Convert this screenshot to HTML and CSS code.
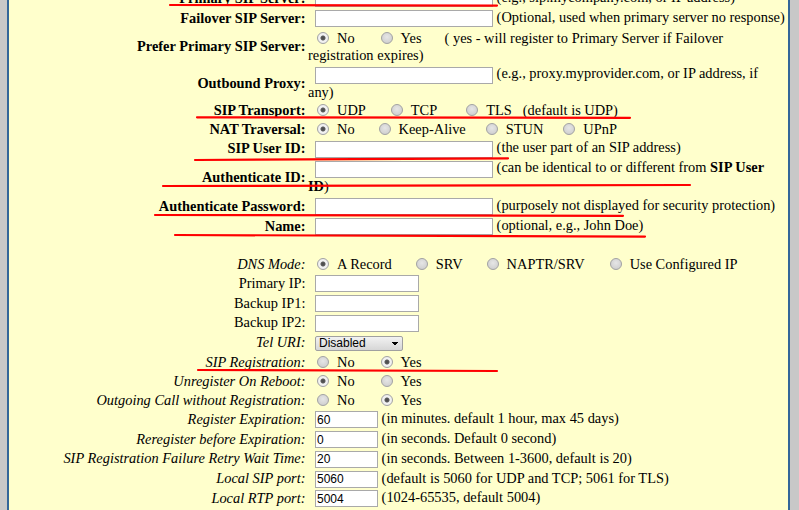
FILE: index.html
```html
<!DOCTYPE html>
<html>
<head>
<meta charset="utf-8">
<title>SIP Account</title>
<link rel="stylesheet" href="styles.css">
</head>
<body>
<div class="panel">
<table class="form">
<colgroup><col class="c1"><col class="c2"></colgroup>
<tbody class="basic">
<tr class="ti"><td class="lbl">Primary SIP Server:</td><td class="val"><input class="tx w178" type="text"> (e.g., sip.mycompany.com, or IP address)</td></tr>
<tr class="ti"><td class="lbl">Failover SIP Server:</td><td class="val"><input class="tx w178" type="text"> (Optional, used when primary server no response)</td></tr>
<tr class="m37"><td class="lbl">Prefer Primary SIP Server:</td><td class="val"><label class="opt first"><input class="rb" type="radio" name="pp" checked>No</label><label class="opt g26"><input class="rb" type="radio" name="pp">Yes</label><span class="note g23">( yes - will register to Primary Server if Failover registration expires)</span></td></tr>
<tr class="m36"><td class="lbl">Outbound Proxy:</td><td class="val"><input class="tx w178" type="text"> (e.g., proxy.myprovider.com, or IP address, if any)</td></tr>
<tr class="tr"><td class="lbl">SIP Transport:</td><td class="val"><label class="opt first"><input class="rb" type="radio" name="tp" checked>UDP</label><label class="opt g25"><input class="rb" type="radio" name="tp">TCP</label><label class="opt g29"><input class="rb" type="radio" name="tp">TLS</label><span class="note g11">(default is UDP)</span></td></tr>
<tr class="tr"><td class="lbl">NAT Traversal:</td><td class="val"><label class="opt first"><input class="rb" type="radio" name="nat" checked>No</label><label class="opt g24"><input class="rb" type="radio" name="nat">Keep-Alive</label><label class="opt g20"><input class="rb" type="radio" name="nat">STUN</label><label class="opt g20"><input class="rb" type="radio" name="nat">UPnP</label></td></tr>
<tr class="tu"><td class="lbl">SIP User ID:</td><td class="val"><input class="tx w178" type="text"> (the user part of an SIP address)</td></tr>
<tr class="m38"><td class="lbl">Authenticate ID:</td><td class="val"><input class="tx w178" type="text"> (can be identical to or different from <b>SIP User ID</b>)</td></tr>
<tr class="ti"><td class="lbl">Authenticate Password:</td><td class="val"><input class="tx w178" type="password"> (purposely not displayed for security protection)</td></tr>
<tr class="ti"><td class="lbl">Name:</td><td class="val"><input class="tx w178" type="text"> (optional, e.g., John Doe)</td></tr>
</tbody>
<tbody class="adv">
<tr class="gap"><td></td><td></td></tr>
<tr class="tr"><td class="lbl">DNS Mode:</td><td class="val"><label class="opt first"><input class="rb" type="radio" name="dns" checked>A Record</label><label class="opt g24"><input class="rb" type="radio" name="dns">SRV</label><label class="opt g24"><input class="rb" type="radio" name="dns">NAPTR/SRV</label><label class="opt g25"><input class="rb" type="radio" name="dns">Use Configured IP</label></td></tr>
<tr class="li"><td class="lbl plain">Primary IP:</td><td class="val"><input class="tx w104" type="text"></td></tr>
<tr class="li"><td class="lbl plain">Backup IP1:</td><td class="val"><input class="tx w104" type="text"></td></tr>
<tr class="li"><td class="lbl plain">Backup IP2:</td><td class="val"><input class="tx w104" type="text"></td></tr>
<tr class="li"><td class="lbl">Tel URI:</td><td class="val"><select class="sel"><option>Disabled</option><option>User=Phone</option><option>Enabled</option></select></td></tr>
<tr class="tr"><td class="lbl">SIP Registration:</td><td class="val"><label class="opt first"><input class="rb" type="radio" name="reg">No</label><label class="opt g26"><input class="rb" type="radio" name="reg" checked>Yes</label></td></tr>
<tr class="tr"><td class="lbl">Unregister On Reboot:</td><td class="val"><label class="opt first"><input class="rb" type="radio" name="unreg" checked>No</label><label class="opt g26"><input class="rb" type="radio" name="unreg">Yes</label></td></tr>
<tr class="tr"><td class="lbl">Outgoing Call without Registration:</td><td class="val"><label class="opt first"><input class="rb" type="radio" name="ocr">No</label><label class="opt g26"><input class="rb" type="radio" name="ocr" checked>Yes</label></td></tr>
<tr class="li"><td class="lbl">Register Expiration:</td><td class="val"><input class="tx w63" type="text" value="60"> (in minutes. default 1 hour, max 45 days)</td></tr>
<tr class="li"><td class="lbl">Reregister before Expiration:</td><td class="val"><input class="tx w63" type="text" value="0"> (in seconds. Default 0 second)</td></tr>
<tr class="li"><td class="lbl">SIP Registration Failure Retry Wait Time:</td><td class="val"><input class="tx w63" type="text" value="20"> (in seconds. Between 1-3600, default is 20)</td></tr>
<tr class="li"><td class="lbl">Local SIP port:</td><td class="val"><input class="tx w63" type="text" value="5060"> (default is 5060 for UDP and TCP; 5061 for TLS)</td></tr>
<tr class="li"><td class="lbl">Local RTP port:</td><td class="val"><input class="tx w63" type="text" value="5004"> (1024-65535, default 5004)</td></tr>
</tbody>
</table>
</div>
<svg class="marks" width="799" height="510" viewBox="0 0 799 510" aria-hidden="true">
<g fill="none" stroke="#ff0000" stroke-width="2.2" stroke-linecap="round">
<path d="M170 5 Q330 4.6 497 5.6"/>
<path d="M197 117.3 Q410 117.2 630 117.8"/>
<path d="M195 160 Q350 159 508 158.3"/>
<path d="M163 186 Q420 184.6 690 185"/>
<path d="M155 215 Q390 214.4 623 215.8"/>
<path d="M175 235 Q410 235.2 645 236.6"/>
<path d="M198 370 Q350 370.2 497 371"/>
</g>
</svg>
</body>
</html>
```
FILE: styles.css
```css
* { box-sizing: border-box; }
html, body { margin: 0; padding: 0; }
body {
  background: #c8c8c8;
  font-family: "Liberation Serif", "Times New Roman", serif;
  font-size: 14.4px;
  color: #000;
  height: 510px;
  overflow: hidden;
}
.panel {
  margin-left: 7px;
  width: 783px;
  min-height: 600px;
  border-left: 2px solid #336699;
  border-right: 2px solid #336699;
  background: #ffffcc;
  display: flow-root;
}
.form {
  width: 778px;
  table-layout: fixed;
  border-collapse: collapse;
  margin-top: -12px;
}
.c1 { width: 298px; }
.c2 { width: 480px; }
.form td { padding: 0; vertical-align: middle; }
.form .lbl { text-align: right; padding-right: 1.5px; white-space: nowrap; }
.form .val { padding-left: 1px; }
.basic .lbl { font-weight: bold; }
.adv .lbl { font-style: italic; }
.adv .lbl.plain { font-style: normal; }
.ti td { height: 20px; }
.tu td { height: 19px; }
.tr td { height: 19px; }
.li td { height: 19.75px; }
.m36 td { height: 36px; }
.m37 td { height: 37px; }
.m38 td { height: 38px; }
.gap td { height: 18.5px; }

.tx {
  height: 17px;
  margin: 0 0 0 7px;
  padding: 0 1px;
  border: 1px solid #a9a9a9;
  background: #fff;
  vertical-align: middle;
  font-family: "Liberation Sans", Arial, sans-serif;
  font-size: 12px;
  color: #000;
}
.w178 { width: 178px; }
.w104 { width: 104px; }
.w63 { width: 63px; }

.opt { white-space: nowrap; }
.opt.first { margin-left: 9px; }
.g11 { margin-left: 11px; }
.g20 { margin-left: 20px; }
.g23 { margin-left: 23px; }
.g24 { margin-left: 24px; }
.g25 { margin-left: 25px; }
.g26 { margin-left: 26px; }
.g29 { margin-left: 29px; }

.rb {
  -webkit-appearance: none;
  appearance: none;
  width: 12px;
  height: 12px;
  margin: 0 8px 0 0;
  border: 1px solid #a3a3a3;
  border-radius: 50%;
  background: radial-gradient(circle at 50% 40%, #e6e6e6 0, #d2d2d2 70%, #c4c4c4 100%);
  vertical-align: -1px;
}
.rb:checked {
  background: radial-gradient(circle, #4a4a4a 0, #5a5a5a 2px, #f4f4f4 3px, #e8e8e8 100%);
}

.sel {
  -webkit-appearance: none;
  appearance: none;
  width: 88px;
  height: 15px;
  margin: 0 0 0 7px;
  padding: 0 0 0 3px;
  border: 1px solid #a0a0a0;
  border-radius: 2px;
  font-family: "Liberation Sans", Arial, sans-serif;
  font-size: 12px;
  line-height: 13px;
  color: #000;
  vertical-align: middle;
  background-image:
    linear-gradient(45deg, transparent 50%, #000 50%),
    linear-gradient(135deg, #000 50%, transparent 50%),
    linear-gradient(#f2f2f2, #d6d6d6);
  background-size: 3px 4px, 3px 4px, 100% 100%;
  background-position: 76px 5px, 79px 5px, 0 0;
  background-repeat: no-repeat;
}

.marks {
  position: absolute;
  left: 0;
  top: 0;
  pointer-events: none;
}
```
